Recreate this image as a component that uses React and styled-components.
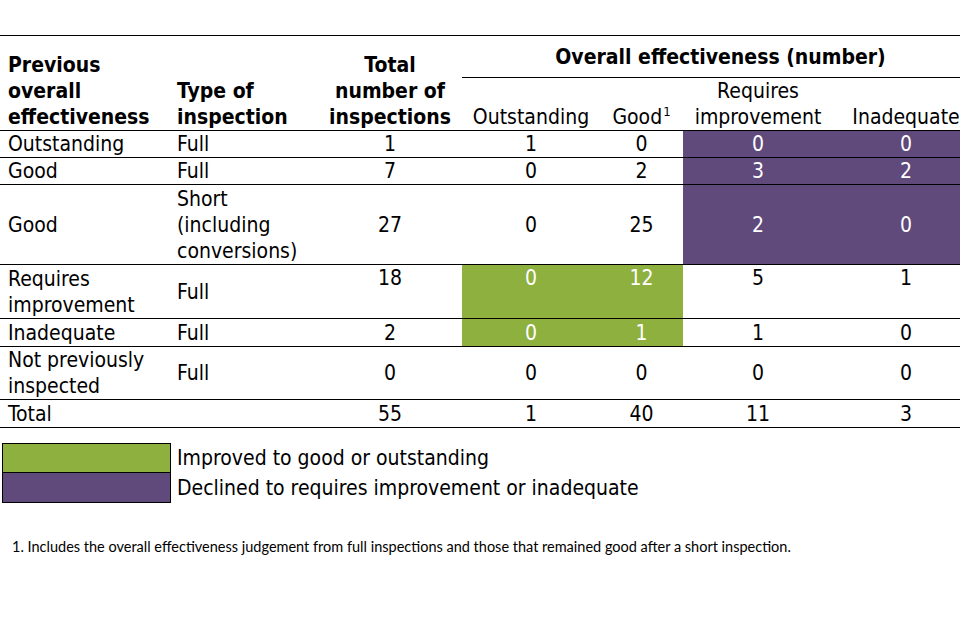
import React from 'react';
import styled, { createGlobalStyle } from 'styled-components';

const GREEN = '#8db03f';
const PURPLE = '#604a7b';

const GlobalStyle = createGlobalStyle`
  html, body {
    margin: 0;
    padding: 0;
    background: #fff;
    overflow: hidden;
  }
  body {
    width: 960px;
    height: 640px;
    font-family: "DejaVu Sans Condensed", "DejaVu Sans", sans-serif;
    color: #000;
  }
`;

const Page = styled.div`
  width: 960px;
  height: 640px;
  overflow: hidden;
  padding-top: 35px;
  box-sizing: border-box;
`;

const Table = styled.table`
  width: 979px;
  border-collapse: collapse;
  table-layout: fixed;
  border-top: 1px solid #000;
  font-size: 21px;
  line-height: 26px;
`;

const HeadCell = styled.th`
  font-weight: bold;
  text-align: ${p => p.$align || 'center'};
  vertical-align: bottom;
  padding: 0 0 0 ${p => p.$pad || 0}px;
  border-bottom: 1px solid #000;
`;

const GroupCell = styled.th`
  font-weight: bold;
  text-align: center;
  vertical-align: middle;
  height: 41px;
  padding: 0;
  border-bottom: 1px solid #000;
`;

const SubHead = styled.th`
  font-weight: normal;
  text-align: center;
  vertical-align: bottom;
  padding: 0;
  height: 50px;
  border-bottom: 1px solid #000;
`;

const Sup = styled.sup`
  font-size: 13px;
  line-height: 0;
  vertical-align: 8px;
  margin-left: 1px;
`;

const Row = styled.tr`
  height: ${p => p.$h}px;
  border-bottom: 1px solid #000;
`;

const LabelCell = styled.td`
  text-align: left;
  vertical-align: middle;
  padding: 0 0 0 ${p => p.$pad}px;
  white-space: nowrap;
`;

const NumCell = styled.td`
  text-align: center;
  vertical-align: ${p => p.$valign || 'middle'};
  padding: 0;
  background: ${p => (p.$tone === 'g' ? GREEN : p.$tone === 'p' ? PURPLE : 'transparent')};
  color: ${p => (p.$tone ? '#fff' : '#000')};
`;

const Legend = styled.div`
  display: grid;
  grid-template-columns: 169px auto;
  grid-template-rows: 30px 30px;
  column-gap: 6px;
  margin: 15px 0 0 2px;
  font-size: 21px;
`;

const Swatch = styled.div`
  background: ${p => p.$color};
  border: 1px solid #000;
  border-top: ${p => (p.$first ? '1px solid #000' : 'none')};
`;

const LegendText = styled.div`
  display: flex;
  align-items: center;
`;

const Footnote = styled.p`
  margin: 35px 0 0 12px;
  font-family: Lato, "Open Sans", sans-serif;
  font-size: 14.5px;
  line-height: 18px;
`;

const rows = [
  { h: 27, prev: ['Outstanding'], type: ['Full'], total: 1, vals: [1, 0, 0, 0], tones: [null, null, 'p', 'p'] },
  { h: 27, prev: ['Good'], type: ['Full'], total: 7, vals: [0, 2, 3, 2], tones: [null, null, 'p', 'p'] },
  { h: 80, prev: ['Good'], type: ['Short', '(including', 'conversions)'], total: 27, vals: [0, 25, 2, 0], tones: [null, null, 'p', 'p'] },
  { h: 54, prev: ['Requires', 'improvement'], type: ['Full'], total: 18, vals: [0, 12, 5, 1], tones: ['g', 'g', null, null], valign: 'top' },
  { h: 28, prev: ['Inadequate'], type: ['Full'], total: 2, vals: [0, 1, 1, 0], tones: ['g', 'g', null, null] },
  { h: 53, prev: ['Not previously', 'inspected'], type: ['Full'], total: 0, vals: [0, 0, 0, 0], tones: [] },
  { h: 28, prev: ['Total'], type: [], total: 55, vals: [1, 40, 11, 3], tones: [] },
];

const lines = arr =>
  arr.map((t, i) => (
    <React.Fragment key={i}>
      {i > 0 && <br />}
      {t}
    </React.Fragment>
  ));

export default function App() {
  return (
    <Page>
      <GlobalStyle />
      <Table>
        <colgroup>
          <col style={{ width: 170 }} />
          <col style={{ width: 148 }} />
          <col style={{ width: 144 }} />
          <col style={{ width: 138 }} />
          <col style={{ width: 83 }} />
          <col style={{ width: 150 }} />
          <col style={{ width: 146 }} />
        </colgroup>
        <thead>
          <tr>
            <HeadCell rowSpan={2} $align="left" $pad={8}>
              Previous<br />overall<br />effectiveness
            </HeadCell>
            <HeadCell rowSpan={2} $align="left" $pad={7}>
              Type of<br />inspection
            </HeadCell>
            <HeadCell rowSpan={2}>
              Total<br />number of<br />inspections
            </HeadCell>
            <GroupCell colSpan={4}>Overall effectiveness (number)</GroupCell>
          </tr>
          <tr>
            <SubHead>Outstanding</SubHead>
            <SubHead>
              Good<Sup>1</Sup>
            </SubHead>
            <SubHead>
              Requires<br />improvement
            </SubHead>
            <SubHead>Inadequate</SubHead>
          </tr>
        </thead>
        <tbody>
          {rows.map((r, i) => (
            <Row key={i} $h={r.h}>
              <LabelCell $pad={8}>{lines(r.prev)}</LabelCell>
              <LabelCell $pad={7}>{lines(r.type)}</LabelCell>
              <NumCell $valign={r.valign}>{r.total}</NumCell>
              {r.vals.map((v, j) => (
                <NumCell key={j} $tone={r.tones[j]} $valign={r.valign}>
                  {v}
                </NumCell>
              ))}
            </Row>
          ))}
        </tbody>
      </Table>
      <Legend>
        <Swatch $color={GREEN} $first />
        <LegendText>Improved to good or outstanding</LegendText>
        <Swatch $color={PURPLE} />
        <LegendText>Declined to requires improvement or inadequate</LegendText>
      </Legend>
      <Footnote>
        1. Includes the overall effectiveness judgement from full inspections and those that remained good after a short inspection.
      </Footnote>
    </Page>
  );
}
